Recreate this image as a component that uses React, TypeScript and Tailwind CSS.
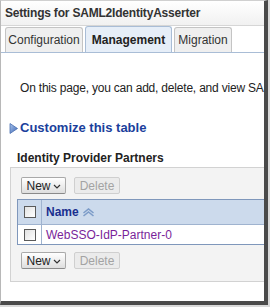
import React from "react";

const font = { fontFamily: '"Liberation Sans", Arial, sans-serif' };

function Btn({ label, disabled, menu }: { label: string; disabled?: boolean; menu?: boolean }) {
  return (
    <div
      className={
        "h-[17px] flex items-center justify-center rounded-[2px] border text-[12px] leading-none " +
        (disabled
          ? "w-[46px] border-[#cfcfcf] bg-[#ebebeb] text-[#a3a3a3]"
          : "w-[45px] border-[#a9a9a9] border-b-[#8a8a8a] bg-gradient-to-b from-white to-[#dedede] text-[#222]")
      }
    >
      <span>{label}</span>
      {menu && (
        <svg width="8" height="5" viewBox="0 0 8 5" className="ml-[2px] mt-[2px]">
          <path d="M1 1 L4 4 L7 1" fill="none" stroke="#333" strokeWidth="1.2" />
        </svg>
      )}
    </div>
  );
}

function Checkbox() {
  return <div className="w-[12px] h-[12px] border border-[#5a5a5a] bg-gradient-to-br from-[#e2e2e2] to-white" />;
}

export default function App() {
  return (
    <div className="w-[270px] h-[307px] bg-[#d9d9d9] overflow-hidden" style={font}>
      <div className="w-[268px] h-[305px] border-l border-t border-l-[#b8b8b8] border-t-[#d0d0d0] border-r-4 border-b-4 border-r-[#4a4a4a] border-b-[#4a4a4a] bg-white flex flex-col overflow-hidden">
        {/* title */}
        <div className="h-[25px] shrink-0 flex items-center px-[4px] bg-gradient-to-b from-white to-[#f1f1f1] border-b border-[#d6d6d6]">
          <span className="text-[12px] font-bold text-[#333] tracking-[-0.2px]">Settings for SAML2IdentityAsserter</span>
        </div>
        {/* tabs */}
        <div className="h-[27px] shrink-0 flex items-end pl-[4px] gap-[2px] border-b border-[#a9bdd6] bg-white">
          <div className="h-[25px] w-[78px] flex items-center justify-center rounded-t-[3px] border border-b-0 border-[#c4c4c4] bg-[#efefef] text-[12px] text-[#333]">
            Configuration
          </div>
          <div className="h-[26px] w-[87px] flex items-center justify-center rounded-t-[3px] border border-b-0 border-[#a9bdd6] bg-[#e6eef8] text-[12px] font-bold text-[#222]">
            Management
          </div>
          <div className="h-[25px] w-[58px] flex items-center justify-center rounded-t-[3px] border border-b-0 border-[#c4c4c4] bg-[#efefef] text-[12px] text-[#333]">
            Migration
          </div>
        </div>
        {/* body */}
        <div className="flex-1 flex flex-col">
          <div className="pl-[19px] pt-[27px] text-[12px] leading-[16px] text-[#222] whitespace-nowrap tracking-[-0.2px]">
            On this page, you can add, delete, and view SAML 2.0
          </div>
          <div className="flex items-center pl-[8px] mt-[24px] gap-[2px]">
            <svg width="9" height="11" viewBox="0 0 9 11">
              <defs>
                <linearGradient id="g" x1="0" y1="0" x2="1" y2="1">
                  <stop offset="0" stopColor="#a9c4ec" />
                  <stop offset="1" stopColor="#3c66b4" />
                </linearGradient>
              </defs>
              <path d="M1 0.5 L8.5 5.5 L1 10.5 Z" fill="url(#g)" stroke="#4a6fb0" strokeWidth="0.8" />
            </svg>
            <span className="text-[13px] leading-[16px] font-bold text-[#1b3f9c]">Customize this table</span>
          </div>
          <div className="pl-[16px] mt-[14px] text-[12px] leading-[16px] font-bold text-[#222]">Identity Provider Partners</div>
          <div className="ml-[9px] mt-[1px] w-[262px] h-[115px] border border-[#d2d2d2] bg-[#f3f3f3] flex flex-col">
            <div className="pl-[10px] pt-[9px]">
              <div className="flex gap-[8px]">
                <Btn label="New" menu />
                <Btn label="Delete" disabled />
              </div>
            </div>
            <div className="ml-[6px] mt-[5px] border-l border-t border-b border-[#7f97bb] bg-white">
              <div className="h-[25px] flex bg-[#ccdaec] border-b border-[#9fb3cf]">
                <div className="w-[24px] flex items-center justify-center border-r border-[#9fb3cf]">
                  <Checkbox />
                </div>
                <div className="flex items-center pl-[4px] gap-[3px]">
                  <span className="text-[12px] font-bold text-[#1a2f8f]">Name</span>
                  <svg width="13" height="9" viewBox="0 0 13 9">
                    <path d="M1.5 5 L6.5 1 L11.5 5" fill="none" stroke="#7d9cc8" strokeWidth="1.6" />
                    <path d="M1.5 8 L6.5 4 L11.5 8" fill="none" stroke="#7d9cc8" strokeWidth="1.6" />
                  </svg>
                </div>
              </div>
              <div className="h-[19px] flex bg-white">
                <div className="w-[24px] flex items-center justify-center border-r border-[#9fb3cf]">
                  <Checkbox />
                </div>
                <div className="flex items-center pl-[4px]">
                  <span className="text-[12px] text-[#7a1f9a]">WebSSO-IdP-Partner-0</span>
                </div>
              </div>
            </div>
            <div className="pl-[10px] pt-[7px]">
              <div className="flex gap-[8px]">
                <Btn label="New" menu />
                <Btn label="Delete" disabled />
              </div>
            </div>
          </div>
        </div>
      </div>
    </div>
  );
}
